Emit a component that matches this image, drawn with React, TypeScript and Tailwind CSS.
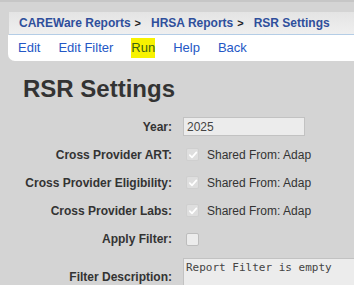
import React from 'react'

const crumbs = ['CAREWare Reports', 'HRSA Reports', 'RSR Settings']
const menu = ['Edit', 'Edit Filter', 'Run', 'Help', 'Back']

function Check({ checked }: { checked?: boolean }) {
  return (
    <span
      className={`flex h-[13px] w-[13px] items-center justify-center rounded-[2px] border ${
        checked ? 'border-[#cfcfcf] bg-[#dedede]' : 'border-[#bdbdbd] bg-[#ececec]'
      }`}
    >
      {checked && (
        <svg width="10" height="10" viewBox="0 0 10 10" fill="none">
          <path d="M1.8 5.2 L4 7.4 L8.4 2.4" stroke="#ffffff" strokeWidth="1.7" strokeLinecap="round" strokeLinejoin="round" />
        </svg>
      )}
    </span>
  )
}

function Row({ label, children }: { label: string; children: React.ReactNode }) {
  return (
    <div className="flex items-center">
      <div className="w-[172px] shrink-0 whitespace-nowrap text-right text-[12px] font-bold text-[#333]">{label}</div>
      <div className="ml-[11px] flex shrink-0 items-center">{children}</div>
    </div>
  )
}

export default function App() {
  return (
    <div className="h-[285px] w-[354px] overflow-hidden border-t-2 border-[#c6c6c6] bg-[#d4d4d4] font-['Liberation_Sans',Arial,sans-serif]">
      {/* Breadcrumb */}
      <div className="ml-[9px] mt-[10px] flex h-[23px] items-center whitespace-nowrap border-b border-[#b4cde6] bg-gradient-to-b from-[#e4e4e4] to-[#efefef] pl-[10px] text-[12px] font-bold text-[#2f4f9c]">
        {crumbs.map((c, i) => (
          <React.Fragment key={c}>
            {i > 0 && <span className="ml-[4px] mr-[10px] text-[11px] text-[#222]">&gt;</span>}
            <span className="shrink-0">{c}</span>
          </React.Fragment>
        ))}
      </div>

      {/* Menu */}
      <div className="ml-[8px] flex h-[26px] items-center gap-[18px] whitespace-nowrap rounded-bl-[7px] bg-white pl-[10px] text-[13px] text-[#2457c5]">
        {menu.map((m) => (
          <span key={m} className={m === 'Run' ? 'bg-[#f7f200] text-[#3b6214]' : ''}>
            {m}
          </span>
        ))}
      </div>

      <h1 className="ml-[23px] mt-[13px] text-[24px] font-bold leading-[30px] text-[#333]">RSR Settings</h1>

      <div className="mt-[13px] flex flex-col gap-[9px]">
        <Row label="Year:">
          <div className="flex h-[19px] w-[122px] items-center border border-[#c2c2c2] bg-[#ececec] pl-[3px] text-[12px] text-[#444]">
            2025
          </div>
        </Row>
        <Row label="Cross Provider ART:">
          <div className="ml-[3px] flex h-[19px] items-center gap-[8px] text-[12px] text-[#333]">
            <Check checked />
            <span>Shared From: Adap</span>
          </div>
        </Row>
        <Row label="Cross Provider Eligibility:">
          <div className="ml-[3px] flex h-[19px] items-center gap-[8px] text-[12px] text-[#333]">
            <Check checked />
            <span>Shared From: Adap</span>
          </div>
        </Row>
        <Row label="Cross Provider Labs:">
          <div className="ml-[3px] flex h-[19px] items-center gap-[8px] text-[12px] text-[#333]">
            <Check checked />
            <span>Shared From: Adap</span>
          </div>
        </Row>
        <Row label="Apply Filter:">
          <div className="ml-[3px] flex h-[20px] items-center">
            <Check />
          </div>
        </Row>
        <Row label="Filter Description:">
          <div className="h-[38px] w-[200px] border border-[#c2c2c2] bg-[#ececec] pl-[2px] pt-[2px] font-['DejaVu_Sans_Mono',monospace] text-[11px] leading-[14px] text-[#444]">
            Report Filter is empty
          </div>
        </Row>
      </div>
    </div>
  )
}
